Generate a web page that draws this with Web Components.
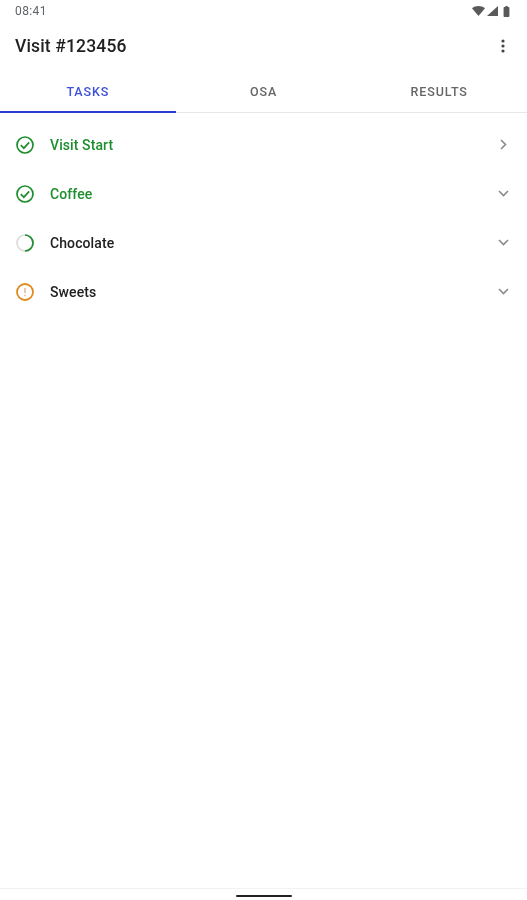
<!DOCTYPE html>
<html>
<head>
<meta charset="utf-8">
<title>Visit</title>
<style>
  html, body { margin: 0; height: 100%; background: #fff; }
  body { font-family: Roboto, "Liberation Sans", sans-serif; }
  visit-screen { height: 900px; }
</style>
</head>
<body>
<visit-screen>
  <status-bar time="08:41"></status-bar>
  <app-bar>Visit #123456</app-bar>
  <tab-strip>
    <tab-item active>TASKS</tab-item>
    <tab-item>OSA</tab-item>
    <tab-item>RESULTS</tab-item>
  </tab-strip>
  <task-list>
    <task-row state="done" chevron="right">Visit Start</task-row>
    <task-row state="done">Coffee</task-row>
    <task-row state="progress">Chocolate</task-row>
    <task-row state="warning">Sweets</task-row>
  </task-list>
  <nav-handle slot="footer"></nav-handle>
</visit-screen>

<script>
  class VisitScreen extends HTMLElement {
    constructor() {
      super();
      this.attachShadow({ mode: 'open' }).innerHTML = `
        <style>
          /* the reference is a soft upscale, so take the edge off everything */
          :host { display: flex; flex-direction: column; background: #fff; filter: blur(.35px); }
          .body { flex: 1; }
        </style>
        <div class="body"><slot></slot></div>
        <slot name="footer"></slot>`;
    }
  }

  class StatusBar extends HTMLElement {
    constructor() {
      super();
      this.attachShadow({ mode: 'open' }).innerHTML = `
        <style>
          :host { display: flex; align-items: center; justify-content: space-between; height: 22px; padding: 0 17px 0 15px; color: #5f6368; }
          .time { font-size: 12px; letter-spacing: .4px; }
          .icons { display: flex; align-items: center; gap: 2px; }
          .icons svg:last-child { margin-left: 3px; }
          svg { display: block; fill: #5a5a5a; }
        </style>
        <span class="time"></span>
        <span class="icons">
          <svg width="13" height="10" viewBox="0 0 13 10"><path d="M0 2.2C1.8.8 4 0 6.5 0S11.2.8 13 2.2L6.5 10z"/></svg>
          <svg width="11" height="10" viewBox="0 0 11 10"><path d="M11 0v10H0z"/></svg>
          <svg width="7" height="11" viewBox="0 0 6 11" preserveAspectRatio="none"><path d="M1.5 1H2V0h2v1h.5c.6 0 1 .4 1 1v8c0 .6-.4 1-1 1h-3c-.6 0-1-.4-1-1V2c0-.6.4-1 1-1z"/></svg>
        </span>`;
      this.shadowRoot.querySelector('.time').textContent = this.getAttribute('time');
    }
  }

  class AppBar extends HTMLElement {
    constructor() {
      super();
      this.attachShadow({ mode: 'open' }).innerHTML = `
        <style>
          :host { display: flex; align-items: center; justify-content: space-between; height: 48px; padding: 0 22px 0 15px; color: #212121; }
          .title { font-size: 17.5px; font-weight: 500; letter-spacing: .15px; }
          svg { display: block; fill: #444; }
        </style>
        <span class="title"><slot></slot></span>
        <svg width="4" height="14" viewBox="0 0 4 14"><circle cx="2" cy="2" r="1.6"/><circle cx="2" cy="7" r="1.6"/><circle cx="2" cy="12" r="1.6"/></svg>`;
    }
  }

  class TabStrip extends HTMLElement {
    constructor() {
      super();
      this.attachShadow({ mode: 'open' }).innerHTML = `
        <style>
          :host { display: grid; grid-template-columns: repeat(3, 1fr); height: 42px; border-bottom: 1px solid #e8e8e8; }
        </style>
        <slot></slot>`;
    }
  }

  class TabItem extends HTMLElement {
    constructor() {
      super();
      this.attachShadow({ mode: 'open' }).innerHTML = `
        <style>
          :host { display: flex; align-items: center; justify-content: center; padding-top: 1px; margin-bottom: -1px; box-sizing: border-box; height: 43px; color: #666; font-size: 12.5px; font-weight: 500; letter-spacing: .9px; border-bottom: 2px solid transparent; }
          :host([active]) { color: #3d50d8; border-bottom-color: #2a3bd0; }
        </style>
        <slot></slot>`;
    }
  }

  class TaskList extends HTMLElement {
    constructor() {
      super();
      this.attachShadow({ mode: 'open' }).innerHTML = `
        <style>
          :host { display: flex; flex-direction: column; padding-top: 7px; }
        </style>
        <slot></slot>`;
    }
  }

  const TASK_ICONS = {
    done: `<circle cx="9" cy="9" r="8" fill="none" stroke="#1e8e2e" stroke-width="1.7"/>
           <path d="M4.8 9.2l3 3L13.2 6.4" fill="none" stroke="#1e8e2e" stroke-width="1.7"/>`,
    progress: `<circle cx="9" cy="9" r="8" fill="none" stroke="#dcdcdc" stroke-width="1.7"/>
               <path d="M9 1a8 8 0 0 1 0 16" fill="none" stroke="#1e8e2e" stroke-width="1.7"/>`,
    warning: `<circle cx="9" cy="9" r="8" fill="none" stroke="#e08a1e" stroke-width="1.8"/>
              <path d="M9 5v5" stroke="#eab9a0" stroke-width="1.6"/>
              <circle cx="9" cy="12.4" r=".9" fill="#eab9a0"/>`,
  };

  const CHEVRONS = {
    right: 'M1 1l4.5 4.5L1 10',
    down: 'M1 1l4.5 4.5L10 1',
  };

  class TaskRow extends HTMLElement {
    constructor() {
      super();
      const state = this.getAttribute('state');
      const dir = this.getAttribute('chevron') || 'down';
      this.attachShadow({ mode: 'open' }).innerHTML = `
        <style>
          :host { display: flex; align-items: center; height: 49px; padding: 0 18px 0 16px; color: #212121; font-size: 14px; font-weight: 500; letter-spacing: .1px; }
          :host([state="done"]) { color: #1e8e2e; }
          .icon { display: block; margin-right: 16px; flex: none; }
          .label { flex: 1; }
          .chev { flex: none; width: 11px; display: flex; justify-content: center; }
          .chev svg { display: block; fill: none; stroke: #8a8a8a; stroke-width: 1.6; }
        </style>
        <svg class="icon" width="18" height="18" viewBox="0 0 18 18">${TASK_ICONS[state]}</svg>
        <span class="label"><slot></slot></span>
        <span class="chev"><svg width="${dir === 'right' ? 7 : 11}" height="${dir === 'right' ? 11 : 7}"><path d="${CHEVRONS[dir]}"/></svg></span>`;
    }
  }

  class NavHandle extends HTMLElement {
    constructor() {
      super();
      this.attachShadow({ mode: 'open' }).innerHTML = `
        <style>
          :host { display: flex; justify-content: center; padding-top: 6px; height: 5px; border-top: 1px solid #f2f2f2; }
          .pill { width: 56px; height: 2px; background: #222; border-radius: 1px; }
        </style>
        <div class="pill"></div>`;
    }
  }

  customElements.define('visit-screen', VisitScreen);
  customElements.define('status-bar', StatusBar);
  customElements.define('app-bar', AppBar);
  customElements.define('tab-strip', TabStrip);
  customElements.define('tab-item', TabItem);
  customElements.define('task-list', TaskList);
  customElements.define('task-row', TaskRow);
  customElements.define('nav-handle', NavHandle);
</script>
</body>
</html>
